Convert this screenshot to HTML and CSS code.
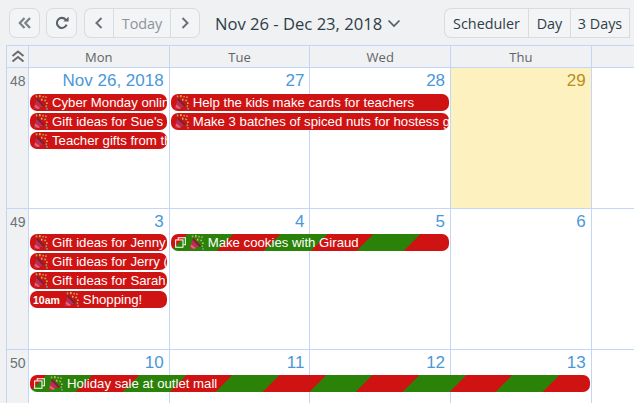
FILE: index.html
```html
<!DOCTYPE html>
<html>
  <head>
    <title>Calendar</title>
    <meta http-equiv="Content-Type" content="text/html; charset=UTF-8"/>
    <link rel="stylesheet" href="styles.css">
  </head>
  <body>
    <svg class="defs" width="0" height="0">
      <symbol id="popper" viewBox="0 0 16 16">
        <path d="M0.5 15.8 L4.2 3 L13 11.8 Z" fill="#b9304f"/>
        <path d="M2.4 10 L7.6 14 L5 14.9 L1.6 12.4 Z" fill="#e8607a"/>
        <path d="M4.2 3 L13 11.8 L10.8 12.4 L3.7 5.2 Z" fill="#7f1d38"/>
        <rect x="3" y="0.5" width="1.6" height="2" fill="#8fc25a"/>
        <rect x="6.5" y="0" width="1.6" height="2.4" fill="#e6b94a"/>
        <rect x="10" y="1" width="1.6" height="1.6" fill="#8fc25a"/>
        <rect x="13" y="1.5" width="1.6" height="1.6" fill="#e88fa0"/>
        <rect x="8.5" y="4" width="1.6" height="2" fill="#e6b94a"/>
        <rect x="12" y="5" width="2" height="1.6" fill="#8fc25a"/>
        <rect x="14" y="8" width="1.6" height="1.6" fill="#e6c45a"/>
        <rect x="13.4" y="11" width="1.6" height="2" fill="#7fb24a"/>
        <rect x="14.2" y="14" width="1.6" height="1.6" fill="#6fa8c8"/>
      </symbol>
      <symbol id="copy" viewBox="0 0 12 12">
        <path d="M3.5 3 V0.7 H11.3 V8.5 H9" fill="none" stroke="#fff" stroke-width="1.1"/>
        <rect x="0.7" y="3.2" width="8" height="8" fill="none" stroke="#fff" stroke-width="1.1"/>
      </symbol>
    </svg>

    <div class="toolbar">
      <button class="btn btn-icon">
        <svg width="14" height="14" viewBox="0 0 14 14"><path d="M6.5 2 L1.8 7 L6.5 12 M12 2 L7.3 7 L12 12" fill="none" stroke="#7a8187" stroke-width="2.2"/></svg>
      </button>
      <button class="btn btn-icon">
        <svg width="14" height="14" viewBox="0 0 14 14"><path d="M11.6 8.6 A5 5 0 1 1 10.8 3.8" fill="none" stroke="#5a6268" stroke-width="2.1"/><path d="M8.4 5.6 H13.6 V0.8 Z" fill="#5a6268"/></svg>
      </button>
      <div class="btn-group">
        <button class="btn btn-nav">
          <svg width="10" height="14" viewBox="0 0 10 14"><path d="M7.5 2 L2.5 7 L7.5 12" fill="none" stroke="#6a7177" stroke-width="2"/></svg>
        </button>
        <button class="btn btn-today">Today</button>
        <button class="btn btn-nav">
          <svg width="10" height="14" viewBox="0 0 10 14"><path d="M2.5 2 L7.5 7 L2.5 12" fill="none" stroke="#6a7177" stroke-width="2"/></svg>
        </button>
      </div>
      <div class="range">
        Nov 26 - Dec 23, 2018
        <svg width="14" height="9" viewBox="0 0 14 9"><path d="M1.5 1.5 L7 7 L12.5 1.5" fill="none" stroke="#555c62" stroke-width="1.7"/></svg>
      </div>
      <div class="btn-group views">
        <button class="btn btn-view v-sched">Scheduler</button>
        <button class="btn btn-view v-day">Day</button>
        <button class="btn btn-view v-three">3 Days</button>
      </div>
    </div>

    <div class="calendar">
      <div class="head">
        <div class="corner">
          <svg width="14" height="13" viewBox="0 0 14 13"><path d="M1.5 6 L7 1.5 L12.5 6 M1.5 11.5 L7 7 L12.5 11.5" fill="none" stroke="#666c71" stroke-width="2"/></svg>
        </div>
        <div class="dow">Mon</div>
        <div class="dow">Tue</div>
        <div class="dow">Wed</div>
        <div class="dow">Thu</div>
        <div class="dow"></div>
      </div>

      <div class="week week-first">
        <div class="wk">48</div>
        <div class="day c1">Nov 26, 2018</div>
        <div class="day c2">27</div>
        <div class="day c3">28</div>
        <div class="day c4 today">29</div>
        <div class="day c5"></div>
        <div class="event c1 r1"><svg class="popper"><use href="#popper"/></svg><span class="label">Cyber Monday online shopping</span></div>
        <div class="event c1 r2"><svg class="popper"><use href="#popper"/></svg><span class="label">Gift ideas for Sue's family</span></div>
        <div class="event c1 r3"><svg class="popper"><use href="#popper"/></svg><span class="label">Teacher gifts from the kids</span></div>
        <div class="event c2 r1 span2"><svg class="popper"><use href="#popper"/></svg><span class="label">Help the kids make cards for teachers</span></div>
        <div class="event c2 r2 span2"><svg class="popper"><use href="#popper"/></svg><span class="label">Make 3 batches of spiced nuts for hostess gifts</span></div>
      </div>

      <div class="week">
        <div class="wk">49</div>
        <div class="day c1">3</div>
        <div class="day c2">4</div>
        <div class="day c3">5</div>
        <div class="day c4">6</div>
        <div class="day c5"></div>
        <div class="event c1 r1"><svg class="popper"><use href="#popper"/></svg><span class="label">Gift ideas for Jenny (books)</span></div>
        <div class="event c1 r2"><svg class="popper"><use href="#popper"/></svg><span class="label">Gift ideas for Jerry (tools)</span></div>
        <div class="event c1 r3"><svg class="popper"><use href="#popper"/></svg><span class="label">Gift ideas for Sarah (music)</span></div>
        <div class="event c1 r4"><b class="time">10am</b><svg class="popper"><use href="#popper"/></svg><span class="label">Shopping!</span></div>
        <div class="event striped c2 r1 span2"><svg class="copy"><use href="#copy"/></svg><svg class="popper"><use href="#popper"/></svg><span class="label">Make cookies with Giraud</span></div>
      </div>

      <div class="week">
        <div class="wk">50</div>
        <div class="day c1">10</div>
        <div class="day c2">11</div>
        <div class="day c3">12</div>
        <div class="day c4">13</div>
        <div class="day c5"></div>
        <div class="event striped c1 r1 span4"><svg class="copy"><use href="#copy"/></svg><svg class="popper"><use href="#popper"/></svg><span class="label">Holiday sale at outlet mall</span></div>
      </div>
    </div>
  </body>
</html>
```

FILE: styles.css
```css
html, body {
  margin: 0;
  height: 403px;
  overflow: hidden;
}
body {
  background: #eff1f3;
  color: #2f3d48;
  font-family: 'Open Sans', sans-serif;
  width: 634px;
}
.defs {
  position: absolute;
}

.toolbar {
  display: flex;
  align-items: center;
  height: 30px;
  padding: 8px 0 7px 9px;
  width: 625px;
  overflow: hidden;
}
.btn {
  display: flex;
  flex: none;
  align-items: center;
  justify-content: center;
  height: 30px;
  margin: 0;
  padding: 0;
  background: #f3f4f6;
  border: 1px solid #d9dbde;
  border-radius: 7px;
  font-family: inherit;
  font-size: 14.4px;
  white-space: nowrap;
  color: #2f3d48;
}
.btn-icon {
  width: 31px;
  margin-right: 6px;
}
.btn-group {
  display: flex;
  flex: none;
  margin-left: 1px;
}
.btn-group .btn {
  border-radius: 0;
  border-right: 0;
}
.btn-group .btn:first-child {
  border-radius: 7px 0 0 7px;
}
.btn-group .btn-nav:last-child {
  border-radius: 0 7px 7px 0;
  border-right: 1px solid #d9dbde;
}
.btn-nav {
  width: 29px;
}
.btn-group .btn-nav:last-child {
  width: 30px;
}
.btn-today {
  width: 57px;
  color: #8d9399;
}
.btn-group .v-three {
  border-right: 1px solid #d9dbde;
}
.range {
  display: flex;
  flex: none;
  align-items: center;
  gap: 5px;
  margin-left: 15px;
  width: 229px;
  font-size: 16.6px;
}
.views {
  margin-left: 0;
}
.btn-view {
  width: 60px;
}
.v-sched {
  width: 84px;
}
.v-day {
  width: 42px;
}
.v-three {
  width: 60px;
}

.calendar {
  margin-left: 6px;
  width: 628px;
  overflow: hidden;
  border-top: 1px solid #c4d6f8;
}
.head,
.week {
  display: grid;
  grid-template-columns: 22px repeat(4, 140.7px) 37.2px;
}
.head {
  height: 21px;
  border-bottom: 1px solid #c4d6f8;
  font-size: 13px;
  color: #5f6468;
}
.corner,
.dow {
  display: flex;
  align-items: center;
  justify-content: center;
  border-left: 1px solid #c4d6f8;
}
.week {
  grid-template-rows: 25px repeat(4, 19px) 1fr;
  height: 140px;
  background: #fff;
  border-bottom: 1px solid #c4d6f8;
}
.week-first {
  grid-template-rows: 26px repeat(4, 19px) 1fr;
}
.wk {
  grid-column: 1;
  grid-row: 1 / -1;
  padding: 5px 0 0 3px;
  background: #eff1f3;
  border-left: 1px solid #c4d6f8;
  font-family: 'Liberation Sans', sans-serif;
  font-size: 14px;
  color: #6d7276;
}
.day {
  grid-row: 1 / -1;
  padding: 2px 5px 0 0;
  border-left: 1px solid #c4d6f8;
  font-family: 'Liberation Sans', sans-serif;
  font-size: 17px;
  line-height: 22px;
  text-align: right;
  color: #4a98d8;
}
.day.today {
  background: #fdf2bf;
  color: #b68d1e;
}

.c1 { grid-column-start: 2; }
.c2 { grid-column-start: 3; }
.c3 { grid-column-start: 4; }
.c4 { grid-column-start: 5; }
.c5 { grid-column-start: 6; }
.r1 { grid-row-start: 2; }
.r2 { grid-row-start: 3; }
.r3 { grid-row-start: 4; }
.r4 { grid-row-start: 5; }
.span2 { grid-column-end: span 2; }
.span4 { grid-column-end: span 4; }

.event {
  display: flex;
  align-items: center;
  height: 17px;
  min-width: 0;
  margin-left: 2px;
  margin-right: 2px;
  padding-left: 3px;
  overflow: hidden;
  white-space: nowrap;
  background: #cf1212;
  border-radius: 7px;
  color: #fff;
  font-family: 'Liberation Sans', sans-serif;
  font-size: 13.2px;
}
.event.span2,
.event.span4 {
  margin-right: 1px;
}
.label {
  flex: 1 1 0;
  min-width: 0;
  overflow: hidden;
}
.striped {
  background: repeating-linear-gradient(135deg, #cf1212 0 11.5px, #2a8208 11.5px 44.5px, #cf1212 44.5px 66px);
}
.popper {
  flex: none;
  width: 15px;
  height: 15px;
  margin-right: 4px;
}
.copy {
  flex: none;
  width: 11px;
  height: 11px;
  margin: 0 3px 0 1px;
}
.time {
  margin-right: 4px;
  font-size: 10.5px;
}
```
